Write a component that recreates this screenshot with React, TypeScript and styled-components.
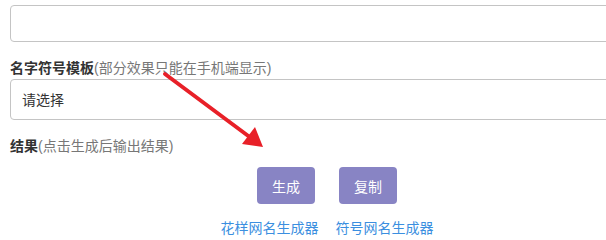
import React from 'react';
import styled, { createGlobalStyle } from 'styled-components';

const GlobalStyle = createGlobalStyle`
	html, body {
		margin: 0;
		padding: 0;
		background: #ffffff;
		overflow: hidden;
	}
	body {
		font-family: 'Liberation Sans', 'Noto Sans CJK SC', sans-serif;
		font-size: 14px;
		color: #333333;
	}
`;

export default function App() {
	return (
		<>
			<GlobalStyle />
			<Page>
				<Group>
					<Label gap={3}>
						<Strong>网名内容</Strong>
						<Hint>(输入你想要的名字)</Hint>
					</Label>
					<TextBox height={37} />
				</Group>
				<Group>
					<Label>
						<Strong>名字符号模板</Strong>
						<Hint>(部分效果只能在手机端显示)</Hint>
					</Label>
					<Select height={41}>
						<option>请选择</option>
					</Select>
				</Group>
				<Group>
					<Label>
						<Strong>结果</Strong>
						<Hint>(点击生成后输出结果)</Hint>
					</Label>
				</Group>
				<Buttons>
					<Button>生成</Button>
					<Button>复制</Button>
				</Buttons>
				<Links>
					<Link href="#">花样网名生成器</Link>
					<Link href="#">符号网名生成器</Link>
				</Links>
			</Page>
			<Arrow viewBox="0 0 606 234" width="606" height="234">
				<line x1="165" y1="74" x2="251" y2="138" stroke="#e82028" strokeWidth="4" strokeLinecap="round" />
				<polygon points="263,147 242,144 255,127" fill="#e82028" />
			</Arrow>
		</>
	);
}

const Page = styled.div`
	width: 634px;
	margin-top: -20px;
	padding-left: 10px;
`;

const Group = styled.div`
	margin-bottom: 15px;
`;

const Label = styled.div<{ gap?: number }>`
	line-height: 22px;
	font-size: 14px;
	margin-bottom: ${p => p.gap ?? 0}px;
`;

const Strong = styled.span`
	font-weight: bold;
	color: #333333;
`;

const Hint = styled.span`
	color: #777777;
`;

const TextBox = styled.div<{ height: number }>`
	box-sizing: border-box;
	height: ${p => p.height}px;
	border: 1px solid #c4c4c4;
	border-radius: 4px;
`;

const Select = styled.select<{ height: number }>`
	box-sizing: border-box;
	display: block;
	width: 100%;
	height: ${p => p.height}px;
	padding: 0 11px;
	border: 1px solid #c4c4c4;
	border-radius: 4px;
	background: #ffffff;
	appearance: none;
	font-family: 'Liberation Sans', 'Noto Sans CJK SC', sans-serif;
	font-size: 14px;
	color: #333333;
`;

const Buttons = styled.div`
	display: flex;
	justify-content: center;
	gap: 24px;
	margin-top: -5px;
`;

const Button = styled.button`
	width: 58px;
	height: 37px;
	border: none;
	border-radius: 4px;
	background: #8884c4;
	color: #ffffff;
	font-family: 'Liberation Sans', 'Noto Sans CJK SC', sans-serif;
	font-size: 14px;
	padding: 0;
`;

const Links = styled.div`
	display: flex;
	justify-content: center;
	gap: 17px;
	margin-top: 14px;
	line-height: 20px;
`;

const Link = styled.a`
	color: #3b8fe0;
	text-decoration: none;
	font-size: 14px;
`;

const Arrow = styled.svg`
	position: absolute;
	left: 0;
	top: 0;
	pointer-events: none;
`;
